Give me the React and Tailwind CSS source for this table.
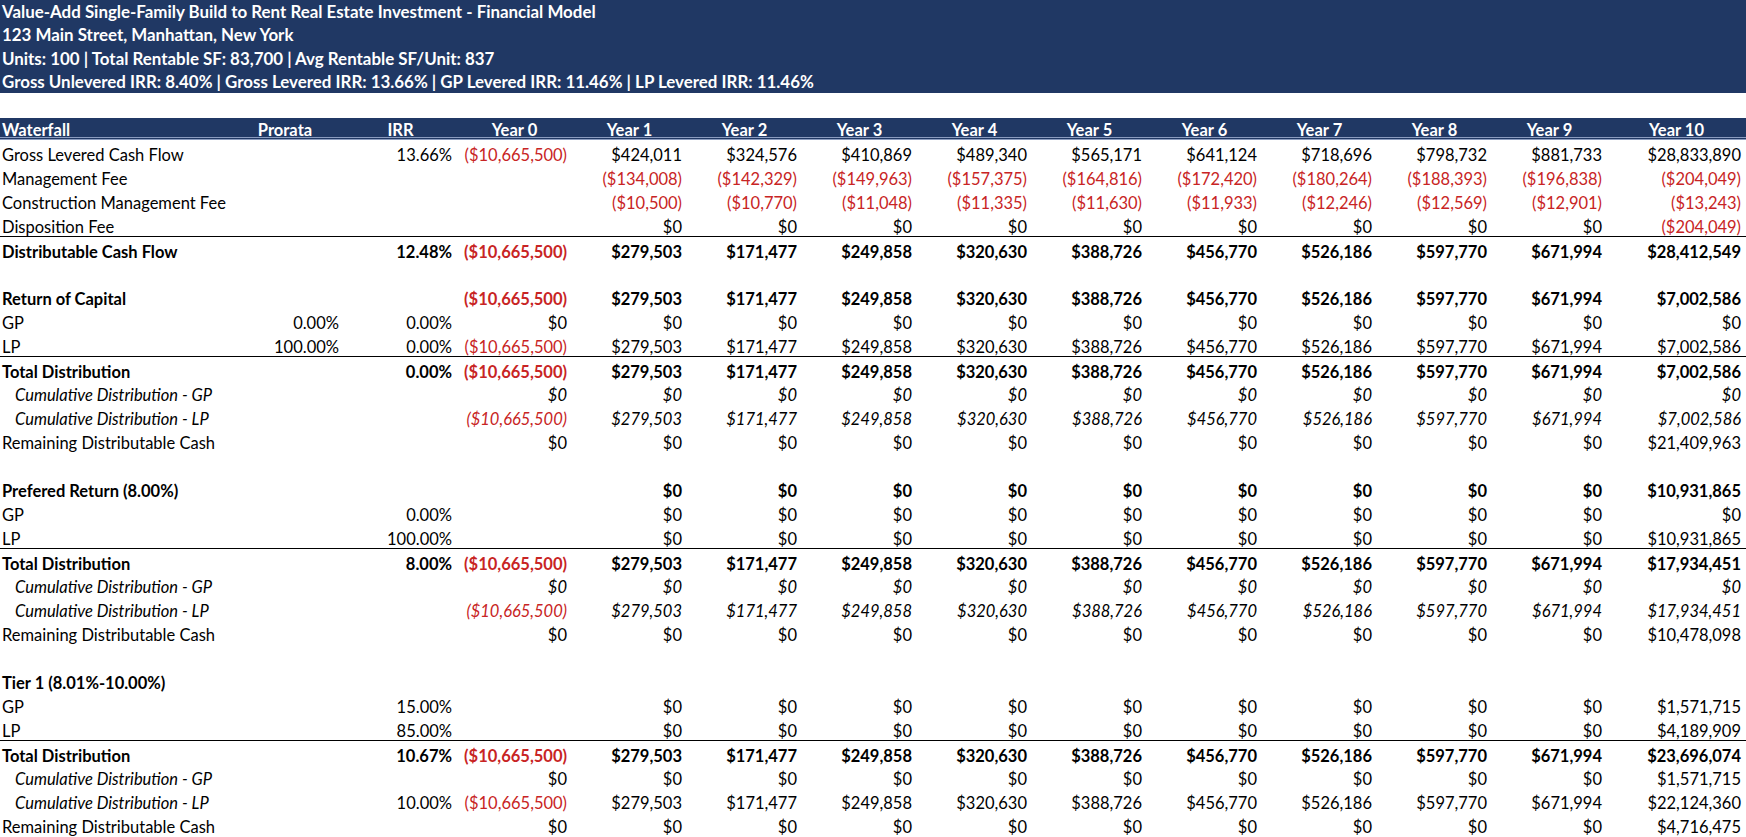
import React from 'react'

// Colonnes: libellé, prorata, IRR, Year 0..Year 10.
const GRILLE = 'grid grid-cols-[226px_118px_113px_repeat(10,115px)_1fr]'

const ENTETE = [
  'Value-Add Single-Family Build to Rent Real Estate Investment - Financial Model',
  '123 Main Street, Manhattan, New York',
  'Units: 100 | Total Rentable SF: 83,700 | Avg Rentable SF/Unit: 837',
  'Gross Unlevered IRR: 8.40% | Gross Levered IRR: 13.66% | GP Levered IRR: 11.46% | LP Levered IRR: 11.46%',
]

const ANNEES = ['Year 0', 'Year 1', 'Year 2', 'Year 3', 'Year 4', 'Year 5', 'Year 6', 'Year 7', 'Year 8', 'Year 9', 'Year 10']

const ZEROS = Array(9).fill('$0')
const DIST = ['$279,503', '$171,477', '$249,858', '$320,630', '$388,726', '$456,770', '$526,186', '$597,770', '$671,994']
const INV = '($10,665,500)'

// type: 'n' normal, 'b' gras, 'i' italique (libellé + valeurs), 'il' italique libellé seul
const LIGNES = [
  { l: 'Gross Levered Cash Flow', irr: '13.66%', v: [INV, '$424,011', '$324,576', '$410,869', '$489,340', '$565,171', '$641,124', '$718,696', '$798,732', '$881,733', '$28,833,890'] },
  { l: 'Management Fee', v: ['', '($134,008)', '($142,329)', '($149,963)', '($157,375)', '($164,816)', '($172,420)', '($180,264)', '($188,393)', '($196,838)', '($204,049)'] },
  { l: 'Construction Management Fee', v: ['', '($10,500)', '($10,770)', '($11,048)', '($11,335)', '($11,630)', '($11,933)', '($12,246)', '($12,569)', '($12,901)', '($13,243)'] },
  { l: 'Disposition Fee', v: ['', ...ZEROS, '($204,049)'] },
  { l: 'Distributable Cash Flow', t: 'b', trait: true, irr: '12.48%', v: [INV, ...DIST, '$28,412,549'] },
  { vide: true },
  { l: 'Return of Capital', t: 'b', v: [INV, ...DIST, '$7,002,586'] },
  { l: 'GP', p: '0.00%', irr: '0.00%', v: ['$0', ...ZEROS, '$0'] },
  { l: 'LP', p: '100.00%', irr: '0.00%', v: [INV, ...DIST, '$7,002,586'] },
  { l: 'Total Distribution', t: 'b', trait: true, irr: '0.00%', v: [INV, ...DIST, '$7,002,586'] },
  { l: 'Cumulative Distribution - GP', t: 'i', v: ['$0', ...ZEROS, '$0'] },
  { l: 'Cumulative Distribution - LP', t: 'i', v: [INV, ...DIST, '$7,002,586'] },
  { l: 'Remaining Distributable Cash', v: ['$0', ...ZEROS, '$21,409,963'] },
  { vide: true },
  { l: 'Prefered Return (8.00%)', t: 'b', v: ['', ...ZEROS, '$10,931,865'] },
  { l: 'GP', irr: '0.00%', v: ['', ...ZEROS, '$0'] },
  { l: 'LP', irr: '100.00%', v: ['', ...ZEROS, '$10,931,865'] },
  { l: 'Total Distribution', t: 'b', trait: true, irr: '8.00%', v: [INV, ...DIST, '$17,934,451'] },
  { l: 'Cumulative Distribution - GP', t: 'i', v: ['$0', ...ZEROS, '$0'] },
  { l: 'Cumulative Distribution - LP', t: 'i', v: [INV, ...DIST, '$17,934,451'] },
  { l: 'Remaining Distributable Cash', v: ['$0', ...ZEROS, '$10,478,098'] },
  { vide: true },
  { l: 'Tier 1 (8.01%-10.00%)', t: 'b', v: [] },
  { l: 'GP', irr: '15.00%', v: ['', ...ZEROS, '$1,571,715'] },
  { l: 'LP', irr: '85.00%', v: ['', ...ZEROS, '$4,189,909'] },
  { l: 'Total Distribution', t: 'b', trait: true, irr: '10.67%', v: [INV, ...DIST, '$23,696,074'] },
  { l: 'Cumulative Distribution - GP', t: 'il', v: ['$0', ...ZEROS, '$1,571,715'] },
  { l: 'Cumulative Distribution - LP', t: 'il', irr: '10.00%', v: [INV, ...DIST, '$22,124,360'] },
  { l: 'Remaining Distributable Cash', v: ['$0', ...ZEROS, '$4,716,475'] },
]

function Valeur({ txt, italique }) {
  const neg = txt.startsWith('(')
  return (
    <div className={`pr-[5px] text-right whitespace-nowrap ${neg ? 'text-[#c82424]' : ''} ${italique ? 'italic' : ''}`}>
      {txt}
    </div>
  )
}

function Ligne({ r }) {
  if (r.vide) return <div className="h-[24px]" />
  const gras = r.t === 'b'
  const italVal = r.t === 'i'
  const italLib = r.t === 'i' || r.t === 'il'
  return (
    <div
      className={`${GRILLE} h-[24px] items-center pt-[3px] ${gras ? 'font-bold' : ''} ${r.trait ? 'border-t border-black' : ''}`}
    >
      <div className={`whitespace-nowrap ${italLib ? 'pl-[15px] italic' : 'pl-[2px]'}`}>{r.l}</div>
      <Valeur txt={r.p || ''} />
      <Valeur txt={r.irr || ''} />
      {ANNEES.map((a, i) => (
        <Valeur key={a} txt={r.v[i] || ''} italique={italVal} />
      ))}
    </div>
  )
}

export default function App() {
  return (
    <div className="h-[837px] w-[1746px] overflow-hidden bg-white font-['Lato',sans-serif] text-[16.5px] text-black">
      <div className="h-[93px] bg-[#203864] text-[16.9px] text-white font-bold">
        {ENTETE.map((t) => (
          <div key={t} className="h-[23.25px] pl-[2px] leading-[23.25px] whitespace-pre">{t}</div>
        ))}
      </div>

      <div className="h-[25px]" />

      <div className={`${GRILLE} h-[22px] items-center bg-[#203864] font-bold text-white border-b-[3px] border-double border-[#8b9cc0]`}>
        <div className="pl-[2px]">Waterfall</div>
        <div className="text-center">Prorata</div>
        <div className="text-center">IRR</div>
        {ANNEES.map((a) => (
          <div key={a} className="text-center">{a}</div>
        ))}
      </div>

      {LIGNES.map((r, i) => (
        <Ligne key={i} r={r} />
      ))}
    </div>
  )
}
